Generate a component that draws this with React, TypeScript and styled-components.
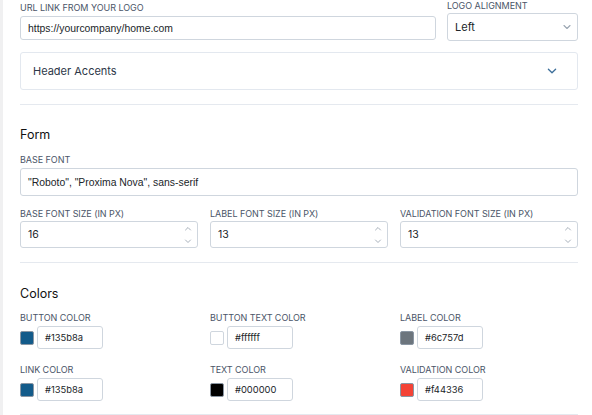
import React from "react";
import styled, { createGlobalStyle } from "styled-components";

const GlobalStyle = createGlobalStyle`
  html, body {
    margin: 0;
    padding: 0;
    background: #ffffff;
    font-family: Inter, "Noto Sans", sans-serif;
    color: #212529;
  }
`;

const Page = styled.div`
  display: flex;
  width: 592px;
  height: 415px;
  overflow: hidden;
`;

const SideStrip = styled.div`
  width: 3px;
  flex-shrink: 0;
  background: #f0f0f1;
`;

const Content = styled.main`
  width: 558px;
  padding-left: 17px;
  display: flex;
  flex-direction: column;
`;

const Row = styled.div<{ $cols: string; $gap?: number; $top?: number }>`
  display: grid;
  grid-template-columns: ${(p) => p.$cols};
  column-gap: ${(p) => p.$gap ?? 12}px;
  align-items: start;
  margin-top: ${(p) => p.$top ?? 0}px;
`;

const Field = styled.div<{ $pad?: number }>`
  display: flex;
  flex-direction: column;
  padding-top: ${(p) => p.$pad ?? 0}px;
`;

const Label = styled.label<{ $gap?: number }>`
  font-size: 9px;
  line-height: 11px;
  text-transform: uppercase;
  color: #4a5568;
  margin-bottom: ${(p) => p.$gap ?? 3}px;
  letter-spacing: -0.05px;
`;

const TextInput = styled.div<{ $h?: number; $size?: number; $plain?: boolean }>`
  height: ${(p) => p.$h ?? 27}px;
  box-sizing: border-box;
  border: 1px solid #cfd6de;
  border-radius: 3px;
  padding: 0 5px 0 7px;
  display: flex;
  align-items: center;
  justify-content: space-between;
  font-family: ${(p) => (p.$plain ? '"Liberation Sans", Arial, sans-serif' : 'Inter, "Noto Sans", sans-serif')};
  font-size: ${(p) => p.$size ?? 10.4}px;
  color: #212529;
`;

const Chevron = ({ color = "#9aa5b1", size = 10 }: { color?: string; size?: number }) => (
  <svg width={size} height={size} viewBox="0 0 10 10" fill="none">
    <path d="M2 3.5 L5 6.5 L8 3.5" stroke={color} strokeWidth="1.1" strokeLinecap="round" strokeLinejoin="round" />
  </svg>
);

const Spinner = () => (
  <svg width="8" height="22" viewBox="0 0 8 22" fill="none">
    <path d="M1.5 6 L4 3.5 L6.5 6" stroke="#a8b1bb" strokeWidth="1" strokeLinecap="round" />
    <path d="M1.5 16 L4 18.5 L6.5 16" stroke="#a8b1bb" strokeWidth="1" strokeLinecap="round" />
  </svg>
);

const Accordion = styled.div`
  margin-top: 11px;
  height: 38px;
  box-sizing: border-box;
  border: 1px solid #e3e8ef;
  border-radius: 3px;
  padding: 0 19px 0 12px;
  display: flex;
  align-items: center;
  justify-content: space-between;
  font-size: 11px;
  color: #2d3748;
`;

const Divider = styled.hr<{ $top: number }>`
  border: none;
  border-top: 1px solid #e5e9ef;
  margin: ${(p) => p.$top}px 0 0 0;
  width: 100%;
`;

const SectionTitle = styled.h2<{ $top: number }>`
  margin: ${(p) => p.$top}px 0 ${(p) => (p.$top > 22 ? 10 : 11)}px 0;
  font-size: 12.5px;
  line-height: 16px;
  font-weight: 400;
  color: #111;
`;

const ColorGrid = styled.div`
  display: grid;
  grid-template-columns: repeat(3, 1fr);
  column-gap: 12px;
  row-gap: 15px;
`;

const ColorRow = styled.div`
  display: flex;
  align-items: center;
  gap: 3px;
`;

const Swatch = styled.span<{ $color: string }>`
  width: 14px;
  height: 14px;
  box-sizing: border-box;
  border-radius: 2px;
  border: 1px solid ${(p) => (p.$color === "#ffffff" ? "#cfd6de" : "#8a96a3")};
  background: ${(p) => p.$color};
`;

const HexBox = styled.div`
  width: 66px;
  height: 23px;
  box-sizing: border-box;
  border: 1px solid #cfd6de;
  border-radius: 3px;
  padding: 0 7px;
  display: flex;
  align-items: center;
  font-size: 9.4px;
  color: #212529;
`;

const colors = [
  { label: "Button color", value: "#135b8a" },
  { label: "Button text color", value: "#ffffff" },
  { label: "Label color", value: "#6c757d" },
  { label: "Link color", value: "#135b8a" },
  { label: "Text color", value: "#000000" },
  { label: "Validation color", value: "#f44336" },
];

const sizes = [
  { label: "Base font size (in px)", value: "16" },
  { label: "Label font size (in px)", value: "13" },
  { label: "Validation font size (in px)", value: "13" },
];

export default function App() {
  return (
    <>
      <GlobalStyle />
      <Page>
        <SideStrip />
        <Content>
          <Row $cols="416px 131px" $gap={11}>
            <Field $pad={2}>
              <Label>URL link from your logo</Label>
              <TextInput $h={24} $plain>https://yourcompany/home.com</TextInput>
            </Field>
            <Field>
              <Label $gap={2}>Logo alignment</Label>
              <TextInput $h={28} $size={11}>
                Left
                <Chevron />
              </TextInput>
            </Field>
          </Row>

          <Accordion>
            Header Accents
            <Chevron color="#3d6f9a" size={12} />
          </Accordion>

          <Divider $top={14} />

          <SectionTitle $top={22}>Form</SectionTitle>
          <Field>
            <Label>Base font</Label>
            <TextInput $h={28} $plain>"Roboto", "Proxima Nova", sans-serif</TextInput>
          </Field>

          <Row $cols="repeat(3, 1fr)" $top={12}>
            {sizes.map((s) => (
              <Field key={s.label}>
                <Label $gap={2}>{s.label}</Label>
                <TextInput $h={27} $size={10.5}>
                  {s.value}
                  <Spinner />
                </TextInput>
              </Field>
            ))}
          </Row>

          <Divider $top={14} />

          <SectionTitle $top={23}>Colors</SectionTitle>
          <ColorGrid>
            {colors.map((c) => (
              <Field key={c.label}>
                <Label>{c.label}</Label>
                <ColorRow>
                  <Swatch $color={c.value} />
                  <HexBox>{c.value}</HexBox>
                </ColorRow>
              </Field>
            ))}
          </ColorGrid>

          <Divider $top={13} />
        </Content>
      </Page>
    </>
  );
}
